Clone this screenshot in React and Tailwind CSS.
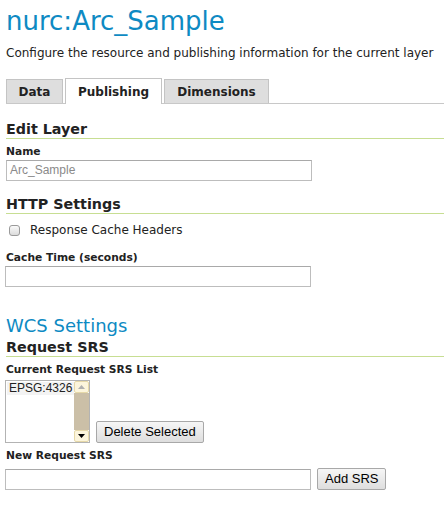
const sans = "font-['DejaVu_Sans',Verdana,sans-serif]";
const arial = "font-['Liberation_Sans',Arial,sans-serif]";

const Heading = ({ children, className = '' }) => (
  <h3 className={`text-[14.3px] font-bold text-[#222] leading-[17px] border-b border-[#c7de92] ${className}`}>
    {children}
  </h3>
);

const Label = ({ children, className = '' }) => (
  <label className={`block text-[10.7px] font-bold text-[#222] leading-[14px] ${className}`}>
    {children}
  </label>
);

const TextInput = ({ value = '', className = '' }) => (
  <div
    className={`h-[21px] border border-[#bdbdbd] border-t-[#a9a9a9] bg-white pl-[3px] ${arial} text-[12px] leading-[19px] text-[#8a8a8a] ${className}`}
  >
    {value}
  </div>
);

const Button = ({ children, className = '' }) => (
  <button
    className={`h-[22px] px-[7px] border border-[#a8a8a8] rounded-[2px] bg-gradient-to-b from-[#f6f6f6] to-[#dedede] ${arial} text-[13px] text-black leading-[20px] ${className}`}
  >
    {children}
  </button>
);

const App = () => {
  return (
    <div className={`w-[444px] h-[521px] overflow-hidden bg-white ${sans} text-[#222]`}>
      {/* Title */}
      <div className="pl-[6px] pt-[5px]">
        <h1 className="text-[26px] leading-[32px] text-[#0e8ac3]">nurc:Arc_Sample</h1>
        <p className="mt-[9px] text-[12px] leading-[15px] text-[#222]">
          Configure the resource and publishing information for the current layer
        </p>
      </div>

      {/* Tabs */}
      <div className="mt-[17px] ml-[6px] flex items-end h-[26px] border-b border-[#c8c8c8]">
        <div className="h-[24px] w-[57px] mr-[2px] bg-[#dedede] border border-[#c4c4c4] border-b-0 text-[12px] font-bold flex items-center justify-center">
          Data
        </div>
        <div className="h-[26px] w-[97px] mr-[2px] -mb-px bg-white border border-[#c4c4c4] border-b-0 text-[12px] font-bold flex items-center justify-center">
          Publishing
        </div>
        <div className="h-[24px] w-[105px] bg-[#dedede] border border-[#c4c4c4] border-b-0 text-[12px] font-bold flex items-center justify-center">
          Dimensions
        </div>
      </div>

      <div className="pl-[6px]">
        {/* Edit Layer */}
        <Heading className="mt-[17px]">Edit Layer</Heading>
        <Label className="mt-[6px]">Name</Label>
        <TextInput value="Arc_Sample" className="mt-[1px] w-[306px]" />

        {/* HTTP Settings */}
        <Heading className="mt-[15px]">HTTP Settings</Heading>
        <div className="mt-[7px] h-[18px] flex items-center">
          <span className="ml-[3px] w-[11px] h-[11px] rounded-[3px] border border-[#9a9a9a] bg-gradient-to-b from-[#fafafa] to-[#dcdcdc]" />
          <span className="ml-[10px] text-[12px] leading-[18px]">Response Cache Headers</span>
        </div>
        <Label className="mt-[12px]">Cache Time (seconds)</Label>
        <TextInput className="mt-[1px] w-[306px] -ml-px" />

        {/* WCS */}
        <h2 className="mt-[28px] text-[18px] leading-[22px] text-[#0e8ac3]">WCS Settings</h2>
        <Heading className="mt-[2px]">Request SRS</Heading>
        <Label className="mt-[6px]">Current Request SRS List</Label>
        <div className="mt-[3px] -ml-px flex items-end">
          <div className="w-[85px] h-[63px] border border-[#b3b3b3] bg-white flex">
            <div className={`flex-1 pt-[1px] pl-[1px] ${arial} text-[12px] leading-[13px]`}>
              <div className="bg-[#f3f3f3] pl-[2px] h-[13px]">EPSG:4326</div>
            </div>
            <div className="w-[15px] flex flex-col">
              <div className="h-[12px] bg-[#fcf5dc] border border-[#e6d8a8] rounded-[2px] flex items-center justify-center">
                <svg width="7" height="4" viewBox="0 0 7 4"><path d="M0 4L3.5 0L7 4Z" fill="#b0b0b0" /></svg>
              </div>
              <div className="flex-1 bg-[#cbbfa7]" />
              <div className="h-[12px] bg-[#fcf5dc] border border-[#e6d8a8] rounded-[2px] flex items-center justify-center">
                <svg width="7" height="4" viewBox="0 0 7 4"><path d="M0 0L3.5 4L7 0Z" fill="#000" /></svg>
              </div>
            </div>
          </div>
          <Button className="ml-[6px] h-[21px]">Delete Selected</Button>
        </div>

        {/* New Request SRS */}
        <Label className="mt-[6px]">New Request SRS</Label>
        <div className="mt-[5px] -ml-px flex items-center">
          <TextInput className="w-[306px]" />
          <Button className="ml-[6px]">Add SRS</Button>
        </div>
      </div>
    </div>
  );
};

export default App;
